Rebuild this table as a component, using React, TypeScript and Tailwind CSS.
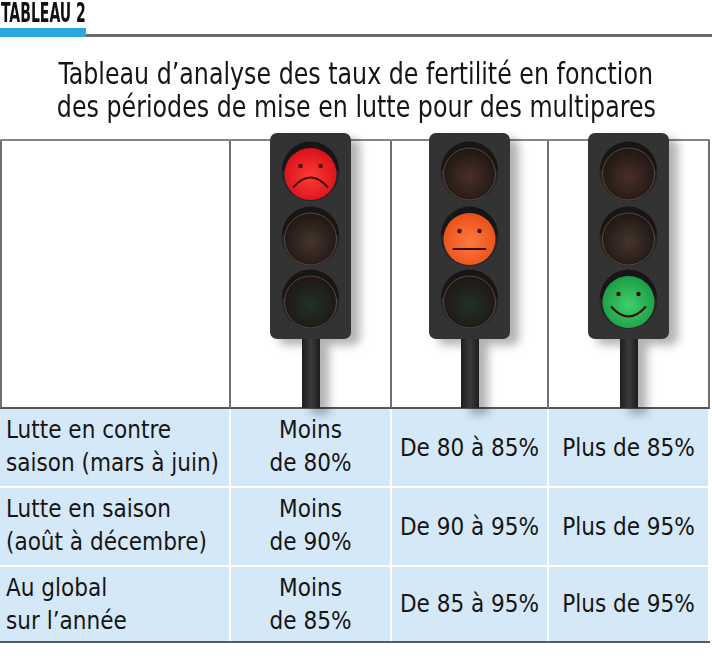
import React from "react";

type Lit = "red" | "orange" | "green";

const font = { fontFamily: '"DejaVu Sans Condensed", "Liberation Sans", sans-serif' };

function Face({ kind, cy }: { kind: Lit; cy: number }) {
  const cx = 40.5;
  const stroke = "#3a0c08";
  return (
    <g stroke={stroke} strokeWidth={2} fill="none" strokeLinecap="round">
      <circle cx={cx - 10} cy={cy - 8} r={2.2} fill={stroke} stroke="none" />
      <circle cx={cx + 10} cy={cy - 8} r={2.2} fill={stroke} stroke="none" />
      {kind === "red" && <path d={`M ${cx - 17} ${cy + 13} Q ${cx} ${cy - 6} ${cx + 17} ${cy + 13}`} />}
      {kind === "orange" && <path d={`M ${cx - 16} ${cy + 10} L ${cx + 16} ${cy + 10}`} />}
      {kind === "green" && <path d={`M ${cx - 17} ${cy + 5} Q ${cx} ${cy + 24} ${cx + 17} ${cy + 5}`} />}
    </g>
  );
}

function TrafficLight({ lit }: { lit: Lit }) {
  const lamps: { key: Lit; cy: number; dim: string; on: [string, string] }[] = [
    { key: "red", cy: 39, dim: "#4a2f26", on: ["#ff3a34", "#d8121a"] },
    { key: "orange", cy: 104, dim: "#45342c", on: ["#ff7a3c", "#e8501a"] },
    { key: "green", cy: 167, dim: "#213029", on: ["#3ed06a", "#1b9c45"] },
  ];
  return (
    <svg width="81" height="275" viewBox="0 0 81 275" className="drop-shadow-[9px_6px_5px_rgba(0,0,0,0.3)]">
      <defs>
        <linearGradient id={`pole-${lit}`} x1="0" x2="1">
          <stop offset="0" stopColor="#1e1e1e" />
          <stop offset="0.5" stopColor="#3a3a3a" />
          <stop offset="1" stopColor="#1c1c1c" />
        </linearGradient>
        {lamps.map((l) => (
          <radialGradient key={l.key} id={`lamp-${lit}-${l.key}`} cx="0.5" cy="0.55" r="0.55">
            <stop offset="0" stopColor={l.key === lit ? l.on[0] : l.dim} />
            <stop offset="1" stopColor={l.key === lit ? l.on[1] : "#1f1713"} />
          </radialGradient>
        ))}
      </defs>
      <rect x="32" y="200" width="18" height="75" fill={`url(#pole-${lit})`} />
      <rect x="0" y="0" width="81" height="206" rx="7" fill="#333333" />
      {lamps.map((l) => (
        <g key={l.key}>
          <circle cx="40.5" cy={l.cy} r="29" fill="#262626" />
          <path d={`M 12 ${l.cy - 2} A 28.5 28.5 0 0 1 69 ${l.cy - 2} Z`} fill="#161616" />
          <circle
            cx="40.5"
            cy={l.cy + 2}
            r="26"
            fill={`url(#lamp-${lit}-${l.key})`}
            stroke={l.key === lit ? "none" : "#5a463c"}
            strokeWidth="1"
          />
          {l.key === lit && <Face kind={lit} cy={l.cy + 2} />}
        </g>
      ))}
    </svg>
  );
}

const rows = [
  { label: ["Lutte en contre", "saison (mars à juin)"], low: "de 80%", mid: "De 80 à 85%", high: "Plus de 85%", h: "h-[77px]" },
  { label: ["Lutte en saison", "(août à décembre)"], low: "de 90%", mid: "De 90 à 95%", high: "Plus de 95%", h: "h-[77px]" },
  { label: ["Au global", "sur l’année"], low: "de 85%", mid: "De 85 à 95%", high: "Plus de 95%", h: "h-[74px]" },
];

export default function App() {
  return (
    <div className="w-[712px] h-[669px] bg-white text-[#151515] overflow-hidden" style={font}>
      <div className="pl-[1px] h-[28px]">
        <span className="inline-block origin-left scale-x-[0.6] text-[26px] leading-[26px] font-bold text-[#111] whitespace-nowrap">TABLEAU 2</span>
      </div>
      <div className="flex items-end">
        <div className="w-[86px] h-[9px] bg-[#2aa7de]" />
        <div className="flex-1 h-[3px] bg-[#6a6a6a]" />
      </div>
      <div className="mt-[20px] flex flex-col items-center text-[30px] leading-[33px]">
        <div className="scale-x-[0.88] whitespace-nowrap">Tableau d’analyse des taux de fertilité en fonction</div>
        <div className="scale-x-[0.88] whitespace-nowrap">des périodes de mise en lutte pour des multipares</div>
      </div>

      <div className="mt-[16px] w-[710px]">
        <div className="grid grid-cols-[231px_161px_157px_161px] h-[270px] border-t-2 border-b-2 border-[#858585] border-b-[#555]">
          <div className="border-l-2 border-r-2 border-[#6f6f6f]" />
          <div className="flex justify-center border-r-2 border-[#6f6f6f]">
            <div className="-mt-[8px]"><TrafficLight lit="red" /></div>
          </div>
          <div className="flex justify-center border-r-2 border-[#6f6f6f]">
            <div className="-mt-[8px]"><TrafficLight lit="orange" /></div>
          </div>
          <div className="flex justify-center border-r-2 border-[#6f6f6f]">
            <div className="-mt-[8px]"><TrafficLight lit="green" /></div>
          </div>
        </div>
        <div className="grid grid-cols-[229px_159px_155px_159px] gap-[2px] bg-white border-b-2 border-[#5a5a5a] pr-[2px]">
          {rows.map((r) => (
            <React.Fragment key={r.mid}>
              <div className={`${r.h} bg-[#d5e8f7] pl-[6px] pt-[5px] text-[24px] leading-[33px]`}>
                <div>{r.label[0]}</div>
                <div>{r.label[1]}</div>
              </div>
              <div className={`${r.h} bg-[#d5e8f7] pt-[5px] text-center text-[24px] leading-[33px]`}>
                <div>Moins</div>
                <div>{r.low}</div>
              </div>
              <div className={`${r.h} bg-[#d5e8f7] flex items-center justify-center text-[24px]`}>{r.mid}</div>
              <div className={`${r.h} bg-[#d5e8f7] flex items-center justify-center text-[24px]`}>{r.high}</div>
            </React.Fragment>
          ))}
        </div>
      </div>
    </div>
  );
}
